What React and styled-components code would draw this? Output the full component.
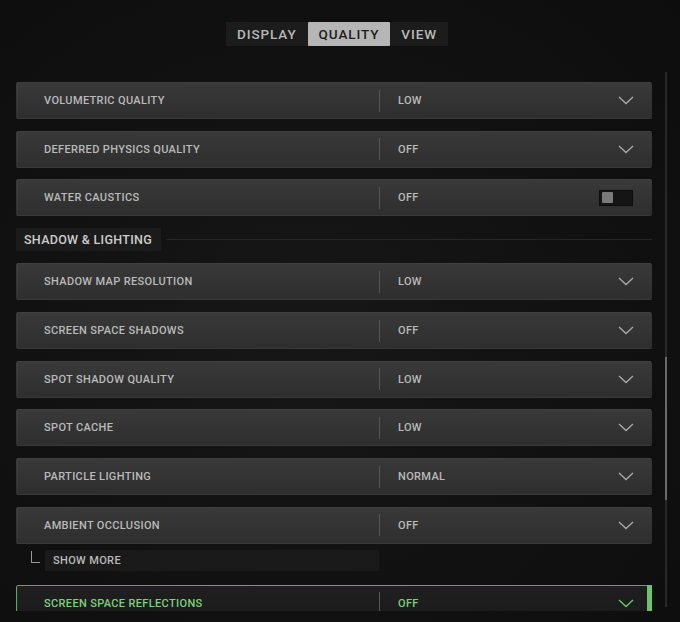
import React from 'react';
import styled, { createGlobalStyle } from 'styled-components';

const GlobalStyle = createGlobalStyle`
    html, body {
        margin: 0;
        padding: 0;
        background: #0f0f0f;
    }
    body {
        font-family: Roboto, "DejaVu Sans", sans-serif;
        -webkit-font-smoothing: antialiased;
    }
`

const Page = styled.div`
    width: 680px;
    height: 622px;
    overflow: hidden;
    background:
        radial-gradient(ellipse at 45% 55%, #171717 0%, #121212 45%, #0d0d0d 100%);
    display: flex;
    flex-direction: column;
`

const TabBar = styled.div`
    align-self: center;
    display: flex;
    margin-top: 22px;
    margin-left: -6px;
    background: #1c1c1c;
    height: 24px;
    padding: 0;
`

const Tab = styled.div`
    display: flex;
    align-items: center;
    justify-content: center;
    padding: 0 11px;
    font-size: 13.5px;
    font-weight: 500;
    letter-spacing: 0.9px;
    color: ${props => (props.active ? '#1c1c1c' : '#b8b8b8')};
    background: ${props => (props.active ? '#b6b6b6' : 'transparent')};
    border-radius: ${props => (props.active ? '1px' : '0')};
`

const Viewport = styled.div`
    margin-top: 24px;
    height: 541px;
    display: flex;
    overflow: hidden;
`

const List = styled.div`
    width: 636px;
    margin-left: 16px;
    padding-top: 12px;
    display: flex;
    flex-direction: column;
`

const Row = styled.div`
    position: relative;
    flex: none;
    height: 37px;
    margin-bottom: ${props => props.gap || '11.7px'};
    box-sizing: border-box;
    display: grid;
    grid-template-columns: 362px 1px 1fr auto;
    align-items: center;
    border-radius: 2px;
    background: ${props => (props.selected
        ? 'linear-gradient(#1f1f1f, #1b1b1b)'
        : 'linear-gradient(#393939, #2e2e2e)')};
    border: ${props => (props.selected ? '1px solid #5da65d' : '1px solid transparent')};
    border-top-color: ${props => (props.selected ? '#5da65d' : '#404040')};
    box-shadow: inset 1px 0 0 rgba(255, 255, 255, 0.04);
`

const Label = styled.div`
    padding-left: 27px;
    font-size: 11px;
    font-weight: 500;
    letter-spacing: 0.35px;
    color: ${props => (props.selected ? '#7fcf7f' : '#bababa')};
`

const Divider = styled.div`
    width: 1px;
    height: 22px;
    background: #565656;
`

const Value = styled.div`
    padding-left: 18px;
    font-size: 11px;
    font-weight: 500;
    letter-spacing: 0.35px;
    color: ${props => (props.selected ? '#7fcf7f' : '#bababa')};
`

const Control = styled.div`
    display: flex;
    align-items: center;
    padding-right: 17px;
`

const Toggle = styled.div`
    width: 34px;
    height: 16px;
    box-sizing: border-box;
    background: #151515;
    border: 1px solid #0c0c0c;
    display: flex;
    align-items: center;
    padding-left: 2px;
    margin-right: 1px;
`

const Knob = styled.div`
    width: 11px;
    height: 11px;
    background: #7a7a7a;
    border-radius: 1px;
`

const SelectBar = styled.div`
    position: absolute;
    right: -1px;
    top: -1px;
    bottom: -1px;
    width: 5px;
    background: #6cc46c;
`

const SectionHead = styled.div`
    display: flex;
    align-items: center;
    height: 23px;
    margin-bottom: 12px;
    flex: none;
`

const SectionTitle = styled.div`
    height: 23px;
    display: flex;
    align-items: center;
    padding: 0 9px 0 8px;
    background: #1b1b1b;
    font-size: 12.5px;
    font-weight: 500;
    letter-spacing: 0.3px;
    color: #cdcdcd;
`

const SectionLine = styled.div`
    flex: 1;
    height: 1px;
    margin-left: 5px;
    background: #262626;
`

const MoreRow = styled.div`
    display: flex;
    align-items: flex-start;
    height: 21px;
    margin-bottom: 14px;
    flex: none;
`

const Elbow = styled.div`
    width: 8px;
    height: 11px;
    margin: 1px 5px 0 15px;
    border-left: 1px solid #9a9a9a;
    border-bottom: 1px solid #9a9a9a;
`

const MoreButton = styled.div`
    width: 334px;
    height: 21px;
    box-sizing: border-box;
    padding-left: 8px;
    display: flex;
    align-items: center;
    background: #1a1a1a;
    font-size: 11px;
    font-weight: 500;
    letter-spacing: 0.35px;
    color: #bababa;
`

const Track = styled.div`
    width: 2px;
    margin: 2px 0 4px 13px;
    background: #282828;
    display: flex;
    flex-direction: column;
`

const Thumb = styled.div`
    margin-top: 285px;
    height: 143px;
    background: #6a6a6a;
`

const Chevron = ({ color }) => (
    <svg width="16" height="9" viewBox="0 0 16 9">
        <path d="M1 1 L8 7.5 L15 1" fill="none" stroke={color} strokeWidth="1.4" />
    </svg>
)

const Setting = ({ label, value, toggle, selected, gap }) => (
    <Row selected={selected} gap={gap}>
        <Label selected={selected}>{label}</Label>
        <Divider />
        <Value selected={selected}>{value}</Value>
        <Control>
            {toggle
                ? <Toggle><Knob /></Toggle>
                : <Chevron color={selected ? '#6cc46c' : '#a9a9a9'} />}
        </Control>
        {selected && <SelectBar />}
    </Row>
)

const App = () => (
    <Page>
        <GlobalStyle />
        <TabBar>
            <Tab>DISPLAY</Tab>
            <Tab active>QUALITY</Tab>
            <Tab>VIEW</Tab>
        </TabBar>
        <Viewport>
            <List>
                <Setting label="VOLUMETRIC QUALITY" value="LOW" />
                <Setting label="DEFERRED PHYSICS QUALITY" value="OFF" />
                <Setting label="WATER CAUSTICS" value="OFF" toggle gap="12px" />
                <SectionHead>
                    <SectionTitle>SHADOW &amp; LIGHTING</SectionTitle>
                    <SectionLine />
                </SectionHead>
                <Setting label="SHADOW MAP RESOLUTION" value="LOW" />
                <Setting label="SCREEN SPACE SHADOWS" value="OFF" />
                <Setting label="SPOT SHADOW QUALITY" value="LOW" />
                <Setting label="SPOT CACHE" value="LOW" />
                <Setting label="PARTICLE LIGHTING" value="NORMAL" />
                <Setting label="AMBIENT OCCLUSION" value="OFF" gap="6px" />
                <MoreRow>
                    <Elbow />
                    <MoreButton>SHOW MORE</MoreButton>
                </MoreRow>
                <Setting label="SCREEN SPACE REFLECTIONS" value="OFF" selected />
            </List>
            <Track>
                <Thumb />
            </Track>
        </Viewport>
    </Page>
)

export default App;
